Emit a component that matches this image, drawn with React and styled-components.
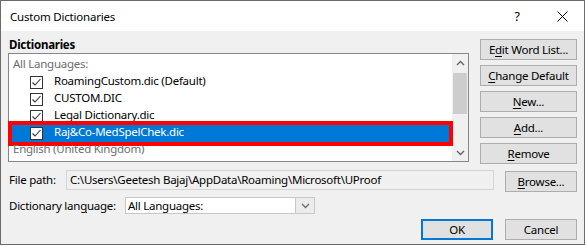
import React from 'react';
import styled, { createGlobalStyle } from 'styled-components';

const Global = createGlobalStyle`
  html, body { margin: 0; padding: 0; background: #ffffff; }
  body {
    font-family: "Noto Sans", "Liberation Sans", sans-serif;
    font-size: 11.5px;
    letter-spacing: -0.25px;
    color: #000;
  }
  * { box-sizing: border-box; }
  u { text-underline-offset: 2px; }
`;

const Window = styled.div`
  width: 585px;
  height: 245px;
  border: 1px solid #6b6b6b;
  background: #f0f0f0;
  display: flex;
  flex-direction: column;
`;

const TitleBar = styled.div`
  height: 30px;
  flex-shrink: 0;
  background: #ffffff;
  display: flex;
  align-items: center;
  padding-left: 9px;
`;

const Title = styled.div`
  flex: 1;
  font-size: 11.5px;
  letter-spacing: -0.2px;
`;

const CaptionButton = styled.div`
  width: ${p => p.$w}px;
  height: 30px;
  display: flex;
  align-items: center;
  justify-content: center;
  font-size: 12.5px;
`;

const Body = styled.div`
  flex: 1;
  display: flex;
  flex-direction: column;
  padding: 6px 7px 0 7px;
`;

const TopRow = styled.div`
  display: flex;
  justify-content: space-between;
`;

const LeftCol = styled.div`
  width: 461px;
  display: flex;
  flex-direction: column;
`;

const SectionLabel = styled.div`
  height: 16px;
  line-height: 16px;
  font-weight: 700;
  padding-left: 1px;
`;

const ListBox = styled.div`
  height: 109px;
  border: 1px solid #828790;
  background: #ffffff;
  display: flex;
`;

const Rows = styled.div`
  flex: 1;
  height: 107px;
  padding-top: 3px;
  clip-path: inset(0 -4px 0 -4px);
`;

const Row = styled.div`
  position: relative;
  height: 17px;
  margin: 0 3px;
  display: flex;
  align-items: center;
  gap: 11px;
  padding-left: ${p => (p.$header ? 1 : 18)}px;
  white-space: nowrap;
  color: ${p => (p.$header ? '#6d6d6d' : p.$selected ? '#ffffff' : '#000000')};
  background: ${p => (p.$selected ? '#0078d7' : 'transparent')};
`;

const RowText = styled.span`
  margin-bottom: 4px;
  line-height: 15px;
`;

const Highlight = styled.div`
  position: absolute;
  inset: -4px;
  border: 4px solid #ff0000;
  pointer-events: none;
`;

const Box = styled.span`
  width: 13px;
  height: 13px;
  flex-shrink: 0;
  border: 1px solid #333333;
  background: #ffffff;
  display: flex;
  align-items: center;
  justify-content: center;
`;

const ScrollBar = styled.div`
  width: 16px;
  background: #f0f0f0;
  display: flex;
  flex-direction: column;
`;

const ScrollArrow = styled.div`
  height: 17px;
  display: flex;
  align-items: center;
  justify-content: center;
`;

const ScrollThumb = styled.div`
  height: 41px;
  margin: 2px 1px 0 1px;
  background: #cdcdcd;
`;

const ScrollTrack = styled.div`
  flex: 1;
`;

const ButtonCol = styled.div`
  width: 97px;
  padding-top: 2px;
  display: flex;
  flex-direction: column;
  gap: 5px;
`;

const Button = styled.div`
  width: ${p => p.$w || 97}px;
  height: 21px;
  flex-shrink: 0;
  background: #e1e1e1;
  border: ${p => (p.$default ? '2px solid #0078d7' : '1px solid #adadad')};
  display: flex;
  align-items: center;
  justify-content: center;
  white-space: nowrap;
  margin-top: ${p => p.$mt || 0}px;
`;

const FieldRow = styled.div`
  display: flex;
  align-items: flex-start;
  margin-top: ${p => p.$mt}px;
`;

const FieldLabel = styled.div`
  width: ${p => p.$w}px;
  padding-left: 1px;
  line-height: ${p => p.$lh}px;
  white-space: nowrap;
`;

const PathBox = styled.div`
  width: 428px;
  height: 20px;
  border: 1px solid #d4d4d4;
  background: #f0f0f0;
  padding-left: 3px;
  line-height: 18px;
  white-space: nowrap;
  overflow: hidden;
  margin-right: 11px;
`;

const Combo = styled.div`
  width: 190px;
  height: 17px;
  border: 1px solid #c8c8c8;
  background: #ffffff;
  display: flex;
`;

const ComboText = styled.div`
  flex: 1;
  padding-left: 2px;
  line-height: 15px;
`;

const ComboDrop = styled.div`
  width: 19px;
  background: #ececec;
  border-left: 1px solid #c8c8c8;
  display: flex;
  align-items: center;
  justify-content: center;
`;

const ActionRow = styled.div`
  display: flex;
  justify-content: flex-end;
  gap: 12px;
  margin-top: 5px;
`;

const Check = () => (
  <Box>
    <svg width="11" height="11" viewBox="0 0 11 11">
      <path d="M1.5 5.5 L4 8 L9.5 2" fill="none" stroke="#333" strokeWidth="1.1" />
    </svg>
  </Box>
);

const Chevron = ({ up, color = '#606060' }) => (
  <svg width="9" height="6" viewBox="0 0 9 6">
    <path d={up ? 'M1 5 L4.5 1.5 L8 5' : 'M1 1 L4.5 4.5 L8 1'} fill="none" stroke={color} strokeWidth="1.3" />
  </svg>
);

const items = [
  { header: true, label: 'All Languages:' },
  { label: 'RoamingCustom.dic (Default)' },
  { label: 'CUSTOM.DIC' },
  { label: 'Legal Dictionary.dic' },
  { label: 'Raj&Co-MedSpelChek.dic', selected: true },
  { header: true, label: 'English (United Kingdom)' },
  { label: 'ukfavlijk.dic' },
];

export default function App() {
  return (
    <>
      <Global />
      <Window>
        <TitleBar>
          <Title>Custom Dictionaries</Title>
          <CaptionButton $w={46}>?</CaptionButton>
          <CaptionButton $w={44}>
            <svg width="11" height="11" viewBox="0 0 11 11">
              <path d="M0.5 0.5 L10.5 10.5 M10.5 0.5 L0.5 10.5" stroke="#000" strokeWidth="1" />
            </svg>
          </CaptionButton>
        </TitleBar>
        <Body>
          <TopRow>
            <LeftCol>
              <SectionLabel>Dictionaries</SectionLabel>
              <ListBox>
                <Rows>
                  {items.map((it, i) => (
                    <Row key={i} $header={it.header} $selected={it.selected}>
                      {!it.header && <Check />}
                      <RowText>{it.label}</RowText>
                      {it.selected && <Highlight />}
                    </Row>
                  ))}
                </Rows>
                <ScrollBar>
                  <ScrollArrow><Chevron up /></ScrollArrow>
                  <ScrollThumb />
                  <ScrollTrack />
                  <ScrollArrow><Chevron /></ScrollArrow>
                </ScrollBar>
              </ListBox>
            </LeftCol>
            <ButtonCol>
              <Button>E<u>d</u>it Word List...</Button>
              <Button><u>C</u>hange Default</Button>
              <Button><u>N</u>ew...</Button>
              <Button><u>A</u>dd...</Button>
              <Button><u>R</u>emove</Button>
            </ButtonCol>
          </TopRow>
          <FieldRow $mt={6}>
            <FieldLabel $w={58} $lh={20}>File path:</FieldLabel>
            <PathBox>C:\Users\Geetesh Bajaj\AppData\Roaming\Microsoft\UProof</PathBox>
            <Button $w={72} $mt={1}><u>B</u>rowse...</Button>
          </FieldRow>
          <FieldRow $mt={5}>
            <FieldLabel $w={117} $lh={17}>Dictionary lan<u>g</u>uage:</FieldLabel>
            <Combo>
              <ComboText>All Languages:</ComboText>
              <ComboDrop><Chevron color="#6a6a6a" /></ComboDrop>
            </Combo>
          </FieldRow>
          <ActionRow>
            <Button $w={72} $default>OK</Button>
            <Button $w={72}>Cancel</Button>
          </ActionRow>
        </Body>
      </Window>
    </>
  );
}
